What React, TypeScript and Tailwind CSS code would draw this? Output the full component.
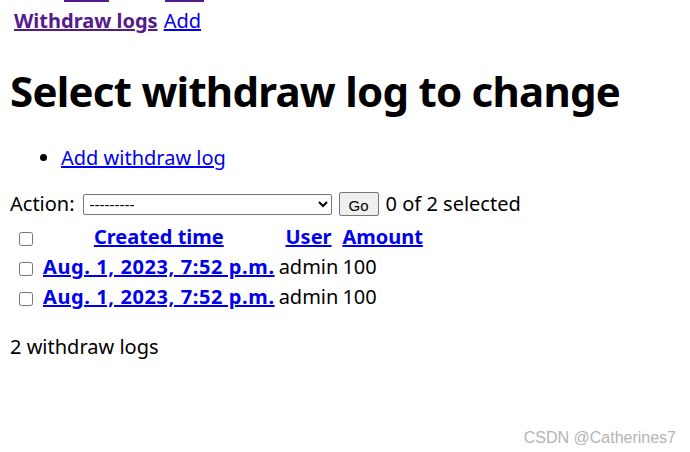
import React from "react";

const rows = [
  { id: 1, created: "Aug. 1, 2023, 7:52 p.m.", user: "admin", amount: 100 },
  { id: 2, created: "Aug. 1, 2023, 7:52 p.m.", user: "admin", amount: 100 },
];

const Checkbox = () => (
  <input type="checkbox" className="mx-[6px] h-[14px] w-[14px] align-middle" />
);

const App = () => {
  return (
    <div className="relative h-[452px] w-[690px] overflow-hidden bg-white font-['Noto_Sans',sans-serif] text-[20px] text-black">
      {/* cut-off links above */}
      <div className="flex h-[2px] items-start">
        <span className="ml-[64px] h-[2px] w-[45px] bg-[#551a8b]" />
        <span className="ml-[56px] h-[2px] w-[39px] bg-[#551a8b]" />
      </div>

      {/* breadcrumbs */}
      <div className="ml-[14px] mt-[6px] flex gap-[6px] leading-[26px]">
        <a href="#" className="font-bold text-[#551a8b] underline">
          Withdraw logs
        </a>
        <a href="#" className="text-[#0000ee] underline">
          Add
        </a>
      </div>

      <div className="px-[10px]">
        <h1 className="mt-[32px] text-[42px] font-bold leading-[50px] tracking-[-0.75px]">
          Select withdraw log to change
        </h1>

        <ul className="mt-[29px] list-disc pl-[51px] leading-[26px]">
          <li>
            <a href="#" className="text-[#0000ee] underline">
              Add withdraw log
            </a>
          </li>
        </ul>

        <div className="mt-[20px] flex items-center leading-[26px]">
          <span>Action:</span>
          <select className="ml-[8px] h-[21px] w-[249px] rounded-[2px] border border-[#767676] bg-white pl-[2px] font-['Liberation_Sans',sans-serif] text-[15px] leading-[17px]">
            <option>---------</option>
          </select>
          <button className="ml-[7px] h-[24px] w-[40px] rounded-[2px] border border-[#767676] bg-[#efefef] font-['Liberation_Sans',sans-serif] text-[15px]">
            Go
          </button>
          <span className="ml-[7px]">0 of 2 selected</span>
        </div>

        <table className="mt-[4px] border-separate border-spacing-[2px] leading-[26px]">
          <thead>
            <tr>
              <th className="p-px">
                <Checkbox />
              </th>
              <th className="p-px text-center font-bold">
                <a href="#" className="text-[#0000ee] underline">
                  Created time
                </a>
              </th>
              <th className="p-px text-center font-bold">
                <a href="#" className="text-[#0000ee] underline">
                  User
                </a>
              </th>
              <th className="p-px text-center font-bold">
                <a href="#" className="text-[#0000ee] underline">
                  Amount
                </a>
              </th>
            </tr>
          </thead>
          <tbody>
            {rows.map((row) => (
              <tr key={row.id}>
                <td className="p-px">
                  <Checkbox />
                </td>
                <th className="p-px text-left font-bold">
                  <a href="#" className="tracking-[0.6px] text-[#0000ee] underline">
                    {row.created}
                  </a>
                </th>
                <td className="p-px">{row.user}</td>
                <td className="p-px">{row.amount}</td>
              </tr>
            ))}
          </tbody>
        </table>

        <p className="mt-[21px] leading-[26px]">2 withdraw logs</p>
      </div>

      <div className="absolute bottom-[5px] right-[14px] font-['Liberation_Sans',sans-serif] text-[16px] leading-[18px] text-[#b4b4b4]">
        CSDN @Catherines7
      </div>
    </div>
  );
};

export default App;
